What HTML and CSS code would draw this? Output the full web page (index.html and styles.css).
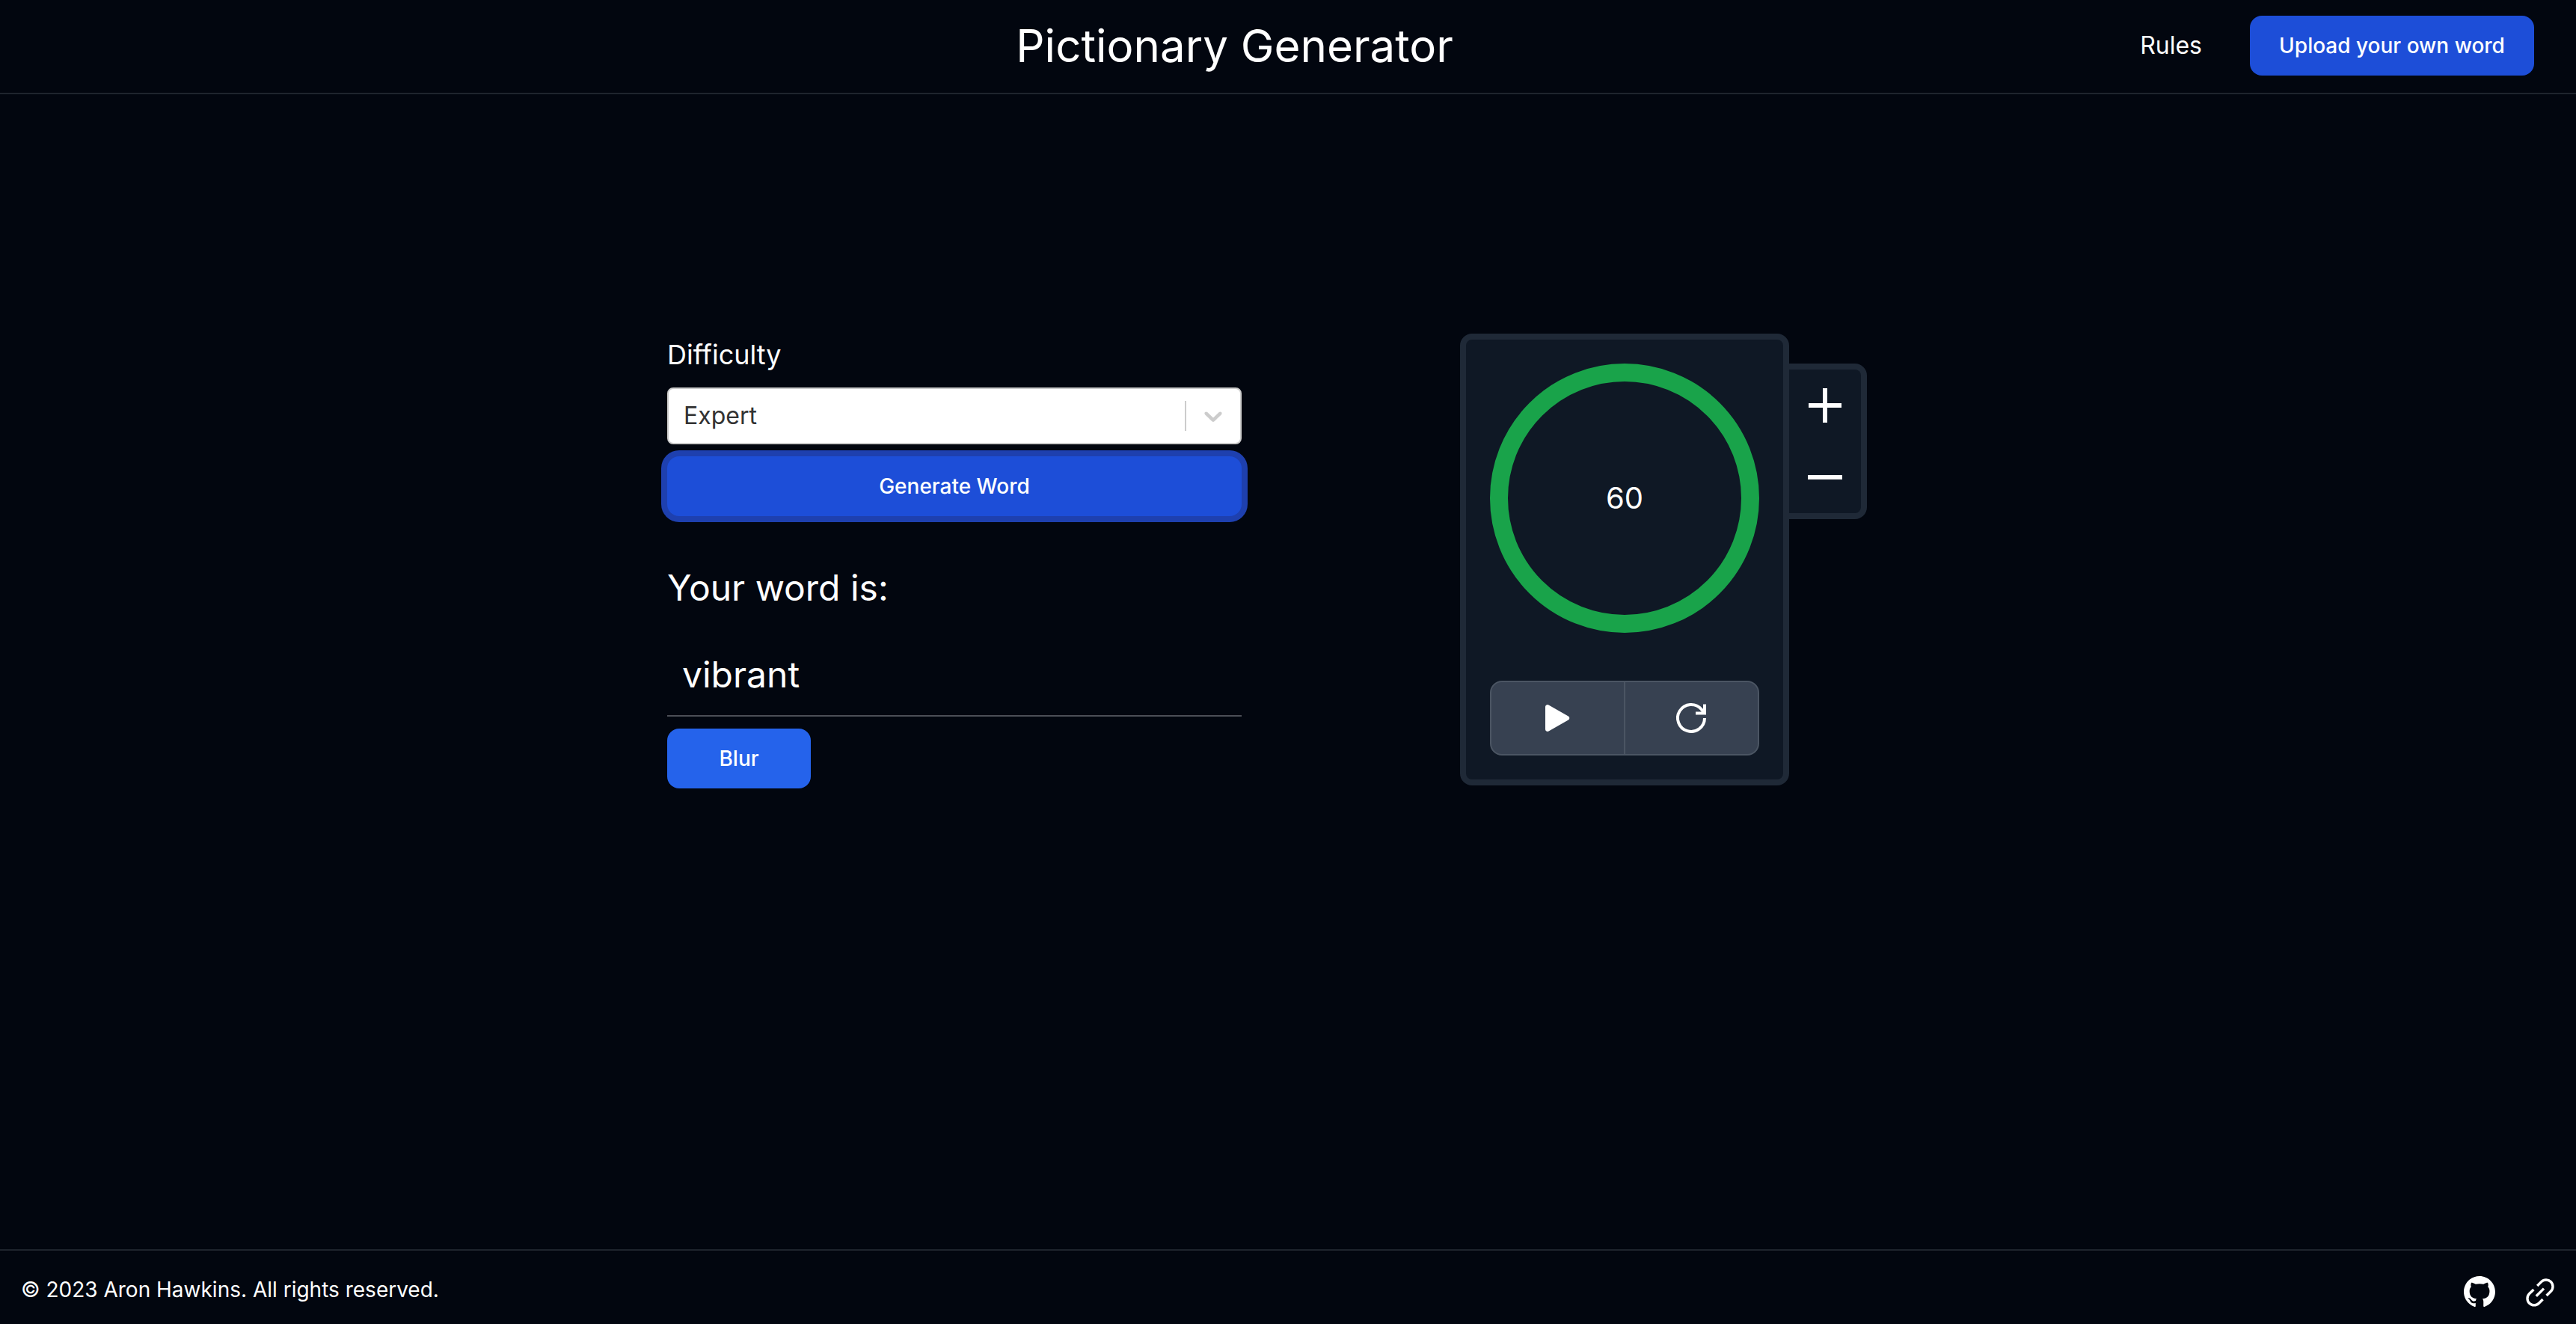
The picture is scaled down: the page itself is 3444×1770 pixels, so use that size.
FILE: index.html
```html
<!DOCTYPE html>
<html lang="en">
<head>
<meta charset="utf-8">
<title>Pictionary Generator</title>
<meta name="viewport" content="width=device-width, initial-scale=1">
<link rel="stylesheet" href="styles.css">
</head>
<body>
<header class="header">
  <h1 class="title">Pictionary Generator</h1>
  <nav class="nav">
    <a class="nav-link" href="#rules">Rules</a>
    <button class="btn btn-upload" type="button">Upload your own word</button>
  </nav>
</header>

<main class="main">
  <section class="generator">
    <label class="label" for="difficulty">Difficulty</label>
    <div class="select-box">
      <select class="select" id="difficulty">
        <option>Easy</option>
        <option>Medium</option>
        <option>Hard</option>
        <option selected>Expert</option>
      </select>
      <span class="select-arrow">
        <svg viewBox="0 0 20 20" aria-hidden="true"><path d="M4.516 7.548c0.436-0.446 1.043-0.481 1.576 0l3.908 3.747 3.908-3.747c0.533-0.481 1.141-0.446 1.574 0 0.436 0.445 0.408 1.197 0 1.615-0.406 0.418-4.695 4.502-4.695 4.502-0.217 0.223-0.502 0.335-0.787 0.335s-0.57-0.112-0.789-0.335c0 0-4.287-4.084-4.695-4.502s-0.436-1.17 0-1.615z"/></svg>
      </span>
    </div>
    <button class="btn btn-generate" type="button">Generate Word</button>
    <h2 class="word-heading">Your word is:</h2>
    <p class="word">vibrant</p>
    <button class="btn btn-blur" type="button">Blur</button>
  </section>

  <section class="timer" aria-label="Timer">
    <div class="timer-card">
      <div class="dial">60</div>
      <div class="controls">
        <button class="control" type="button" aria-label="Start">
          <svg viewBox="0 0 48 48" aria-hidden="true"><path d="M7 9A3 3 0 0 1 11.5 6.4L37.8 21.4A3 3 0 0 1 37.8 26.6L11.5 41.6A3 3 0 0 1 7 39Z"/></svg>
        </button>
        <button class="control" type="button" aria-label="Reset">
          <svg viewBox="0 0 48 48" aria-hidden="true"><path d="M41 24A18 18 0 1 1 36.5 12L41 17.5M41 5.5V17.5H29" fill="none" stroke="currentColor" stroke-width="4"/></svg>
        </button>
      </div>
    </div>
    <div class="adjust">
      <button class="adjust-btn" type="button" aria-label="Add time">
        <svg viewBox="0 0 64 64" aria-hidden="true"><path d="M32 9V55M10 32H54"/></svg>
      </button>
      <button class="adjust-btn" type="button" aria-label="Remove time">
        <svg viewBox="0 0 64 64" aria-hidden="true"><path d="M9 32H55"/></svg>
      </button>
    </div>
  </section>
</main>

<footer class="footer">
  <p class="copyright">© 2023 Aron Hawkins. All rights reserved.</p>
  <div class="socials">
    <a class="social" href="#github" aria-label="GitHub">
      <svg viewBox="0 0 16 16" aria-hidden="true"><path d="M8 0C3.58 0 0 3.58 0 8c0 3.54 2.29 6.53 5.47 7.59.4.07.55-.17.55-.38 0-.19-.01-.82-.01-1.49-2.01.37-2.53-.49-2.69-.94-.09-.23-.48-.94-.82-1.13-.28-.15-.68-.52-.01-.53.63-.01 1.08.58 1.23.82.72 1.21 1.87.87 2.33.66.07-.52.28-.87.51-1.07-1.78-.2-3.64-.89-3.64-3.95 0-.87.31-1.59.82-2.15-.08-.2-.36-1.02.08-2.12 0 0 .67-.21 2.2.82.64-.18 1.32-.27 2-.27s1.36.09 2 .27c1.53-1.04 2.2-.82 2.2-.82.44 1.1.16 1.92.08 2.12.51.56.82 1.27.82 2.15 0 3.07-1.87 3.75-3.65 3.95.29.25.54.73.54 1.48 0 1.07-.01 1.93-.01 2.2 0 .21.15.46.55.38A8.01 8.01 0 0 0 16 8c0-4.42-3.58-8-8-8z"/></svg>
    </a>
    <a class="social" href="#link" aria-label="Website">
      <svg viewBox="0 0 42 42" aria-hidden="true"><path d="M18.2 13L23.6 7.6A9 9 0 0 1 36.4 20.3L30.6 26M25.6 31L20.4 36.2A9 9 0 0 1 7.6 23.5L13.4 18M16.8 26.8L27 16.6" fill="none" stroke="currentColor" stroke-width="3.4"/></svg>
    </a>
  </div>
</footer>
</body>
</html>
```
FILE: styles.css
```css
* {
  box-sizing: border-box;
}

body {
  display: flex;
  flex-direction: column;
  min-height: 100vh;
  margin: 0;
  background: #02060f;
  color: #fff;
  font-family: Inter, "Liberation Sans", sans-serif;
  font-size: 32px;
  line-height: 48px;
}

h1,
h2,
p {
  margin: 0;
  font-weight: 400;
}

button {
  border: 0;
  padding: 0;
  color: inherit;
  font: inherit;
  cursor: pointer;
}

svg {
  display: block;
  fill: currentColor;
}

.header {
  display: flex;
  align-items: center;
  justify-content: space-between;
  padding: 21px 56px 23px;
  border-bottom: 2px solid #1e242d;
}

/* Empty slot opposite the navigation */
.header::before {
  content: "";
  width: 384px;
}

.title {
  font-size: 60px;
  line-height: 72px;
}

.nav {
  display: flex;
  align-items: center;
  justify-content: flex-end;
  gap: 64px;
}

.nav-link {
  color: inherit;
  text-decoration: none;
}

.btn {
  height: 80px;
  border-radius: 16px;
  background: #1d4ed8;
  font-size: 28px;
  font-weight: 500;
  line-height: 40px;
}

.btn-upload {
  width: 380px;
}

.main {
  display: flex;
  flex: 1;
  align-items: flex-start;
  justify-content: center;
  gap: 292px;
  padding: 320px 56px 0;
}

.generator {
  display: flex;
  flex-direction: column;
  width: 768px;
}

.label {
  margin-bottom: 16px;
  font-size: 36px;
  line-height: 56px;
}

.select-box {
  display: flex;
  position: relative;
}

.select {
  flex: 1;
  height: 76px;
  padding: 0 80px 0 20px;
  border: 2px solid #ccc;
  border-radius: 8px;
  appearance: none;
  background: #fff;
  color: #333;
  font: inherit;
}

.select-arrow {
  position: absolute;
  top: 18px;
  right: 2px;
  padding: 0 16px;
  border-left: 2px solid #ccc;
  color: #ccc;
  pointer-events: none;
}

.select-arrow svg {
  width: 40px;
  height: 40px;
}

.btn-generate {
  margin-top: 16px;
  box-shadow: 0 0 0 8px #1e40af;
}

.word-heading {
  margin-top: 64px;
  font-size: 48px;
  line-height: 64px;
}

.word {
  margin-top: 32px;
  padding: 20px 20px 22px;
  border-bottom: 2px solid #4b4e56;
  font-size: 48px;
  line-height: 64px;
}

.btn-blur {
  align-self: flex-start;
  width: 192px;
  margin-top: 16px;
  background: #2563eb;
}

.timer {
  display: flex;
  align-items: flex-start;
  width: 600px;
}

.timer-card {
  width: 440px;
  padding: 32px;
  border: 8px solid #1f2937;
  border-radius: 16px;
  background: #0f1825;
}

.dial {
  display: flex;
  align-items: center;
  justify-content: center;
  height: 360px;
  border: 24px solid #19a34a;
  border-radius: 50%;
  font-size: 40px;
}

.controls {
  display: flex;
  height: 100px;
  margin-top: 64px;
  border: 2px solid #4b5563;
  border-radius: 16px;
  background: #374151;
}

.control {
  display: flex;
  flex: 1;
  align-items: center;
  justify-content: center;
  background: none;
}

.control + .control {
  border-left: 2px solid #4b5563;
}

.control svg {
  width: 48px;
  height: 48px;
}

.adjust {
  margin-top: 40px;
  border: 8px solid #1f2937;
  border-left: 0;
  border-radius: 0 16px 16px 0;
  background: #0f1825;
}

.adjust-btn {
  display: block;
  padding: 16px;
  background: none;
}

.adjust-btn svg {
  width: 64px;
  height: 64px;
  stroke: currentColor;
  stroke-width: 6;
}

.footer {
  display: flex;
  align-items: flex-end;
  justify-content: space-between;
  padding: 28px 28px 22px;
  border-top: 2px solid #1e242d;
}

.copyright {
  font-size: 28px;
}

.socials {
  display: flex;
  gap: 38px;
}

.social {
  color: inherit;
}

.social svg {
  width: 42px;
  height: 42px;
}
```
